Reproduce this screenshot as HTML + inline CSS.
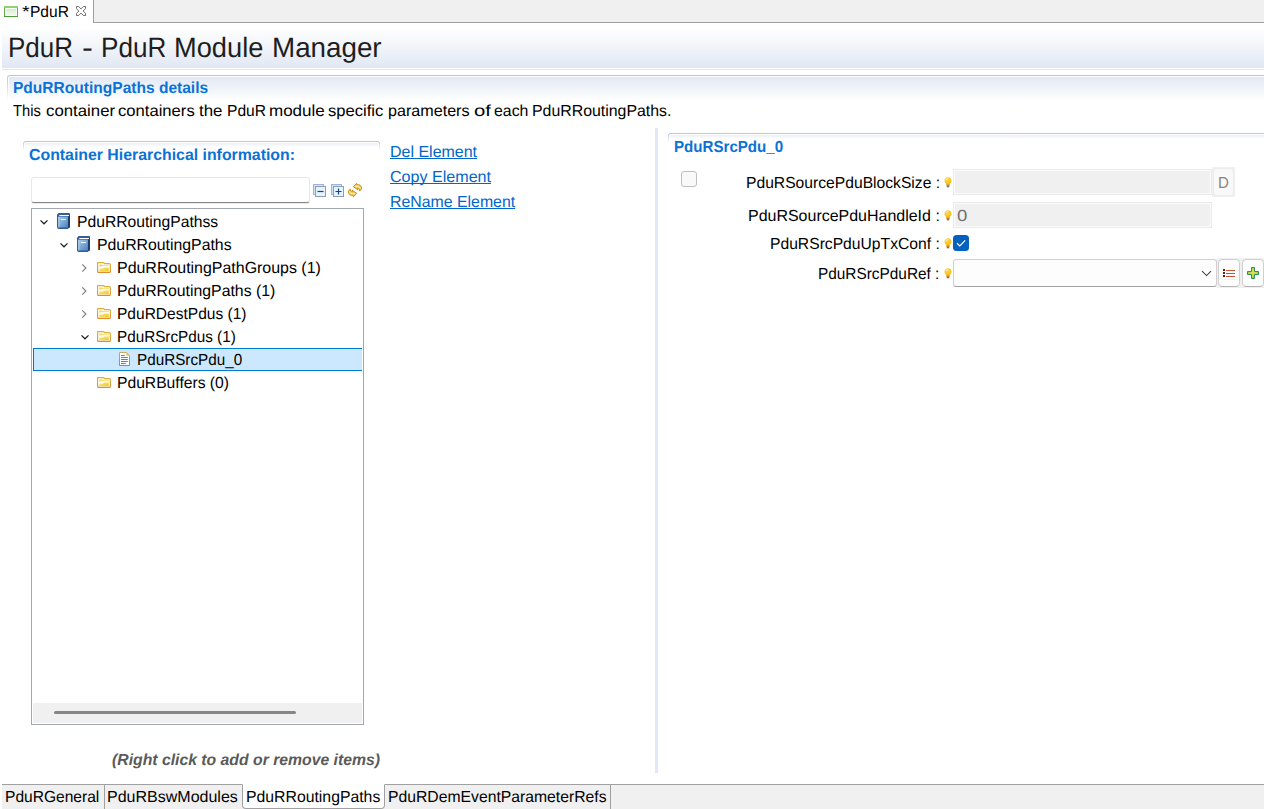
<!DOCTYPE html>
<html><head><meta charset="utf-8"><title>PduR</title>
<style>
html,body{margin:0;padding:0;overflow:hidden;}
body{width:1264px;height:809px;position:relative;overflow:hidden;background:#fff;font-family:"Liberation Sans",sans-serif;}
.a{position:absolute;box-sizing:border-box;}
.t{position:absolute;text-rendering:geometricPrecision;white-space:pre;transform-origin:0 50%;font-family:"Liberation Sans",sans-serif;}
</style></head><body>
<!-- top tab bar -->
<div class="a" style="left:93px;top:0;width:1171px;height:23px;background:#f0f0f0;border-left:1px solid #a0a0a0;border-bottom:1px solid #a0a0a0;"></div>
<!-- tab icon -->
<div class="a" style="left:4px;top:6px;width:14px;height:11px;background:#62ae48;border-bottom:1px solid #4f9a3a;"><div style="position:absolute;left:0;top:0;right:0;height:2px;background:#8fd272"></div><div style="position:absolute;left:1px;top:2px;right:1px;bottom:0px;background:#fbfefa"></div><div style="position:absolute;left:2px;top:3px;right:2px;bottom:1px;background:linear-gradient(#d9edcf,#f1f9ed)"></div></div>
<!-- close X -->
<svg class="a" style="left:76px;top:6px" width="10" height="10" viewBox="0 0 10 10"><path d="M0.5 0.5 H2.6 L5 2.9 L7.4 0.5 H9.5 V2.6 L7.1 5 L9.5 7.4 V9.5 H7.4 L5 7.1 L2.6 9.5 H0.5 V7.4 L2.9 5 L0.5 2.6 Z" fill="#fff" stroke="#5a5a5a" stroke-width="0.9"/></svg>
<!-- heading gradient -->
<div class="a" style="left:2px;top:23px;width:1262px;height:45px;background:linear-gradient(#ffffff 0%,#ffffff 10%,#e1e8f3 100%);"></div>
<div class="a" style="left:2px;top:69px;width:1262px;height:1px;background:#e2e8f3;"></div>
<!-- section 1 -->
<div class="a" style="left:7px;top:75px;width:1257px;height:26px;border-radius:3px 0 0 0;background:linear-gradient(#b4c6e0,#ffffff);"></div>
<div class="a" style="left:8px;top:76px;width:1256px;height:25px;border-radius:2px 0 0 0;background:#fff;"></div>
<div class="a" style="left:9px;top:77px;width:1255px;height:24px;background:linear-gradient(#e2e8f4,#ffffff);"></div>
<!-- section 2 (left) -->
<div class="a" style="left:23px;top:141px;width:357px;height:10px;border-radius:3px 3px 0 0;background:linear-gradient(#b4c6e0,#ffffff);"></div>
<div class="a" style="left:24px;top:142px;width:355px;height:10px;border-radius:2px 2px 0 0;background:#fff;"></div>
<div class="a" style="left:25px;top:143px;width:353px;height:4px;background:linear-gradient(#e9eef6,#ffffff);"></div>
<!-- filter text -->
<div class="a" style="left:31px;top:177px;width:279px;height:26px;border:1px solid #e8e8e8;border-bottom:1px solid #868686;border-radius:3px;background:#fff;box-shadow:0 1px 0 rgba(0,0,0,0.08);"></div>
<!-- collapse/expand icons -->
<svg class="a" style="left:313px;top:184px" width="13" height="13" viewBox="0 0 13 13"><rect x="0.5" y="0.5" width="10" height="10" fill="#cfe4f7" stroke="#a3b3cc"/><rect x="2.5" y="2.5" width="10" height="10" fill="#e6f2fc" stroke="#8c9bb8"/><path d="M4.5 7.5 H10.5" stroke="#0a4a86" stroke-width="1.2"/></svg>
<svg class="a" style="left:331px;top:184px" width="13" height="13" viewBox="0 0 13 13"><rect x="0.5" y="0.5" width="10" height="10" fill="#cfe4f7" stroke="#a3b3cc"/><rect x="2.5" y="2.5" width="10" height="10" fill="#e6f2fc" stroke="#8c9bb8"/><path d="M4.5 7.5 H10.5 M7.5 4.5 V10.5" stroke="#0a4a86" stroke-width="1.2"/></svg>
<!-- sync icon -->
<svg class="a" style="left:347px;top:182px" width="16" height="16" viewBox="0 0 16 16"><g fill="#fbd35c" stroke="#c48c12" stroke-width="1" stroke-linejoin="round"><path id="sa" d="M6.3 4.6 L9.6 1.3 L9.9 2.9 C12.3 2.1 14.6 3.6 14.5 6.2 C14.4 7.6 13.7 8.5 12.6 8.9 C12.9 7.4 12.2 6.3 10.6 6.2 L10.9 7.9 Z"/><path d="M9.7 11.4 L6.4 14.7 L6.1 13.1 C3.7 13.9 1.4 12.4 1.5 9.8 C1.6 8.4 2.3 7.5 3.4 7.1 C3.1 8.6 3.8 9.7 5.4 9.8 L5.1 8.1 Z"/></g><g fill="none" stroke="#fff6d8" stroke-width="0.8" stroke-linecap="round"><path d="M8.6 4.3 C10.5 3.6 12.6 4.2 13.2 6.2"/><path d="M7.4 11.7 C5.5 12.4 3.4 11.8 2.8 9.8"/></g></svg>
<!-- tree box -->
<div class="a" style="left:31px;top:208px;width:333px;height:517px;border:1px solid #a3a7b0;background:#fff;"></div>
<div class="a" style="left:33px;top:703px;width:329px;height:20px;background:#f0f0f0;"></div>
<div class="a" style="left:54px;top:711px;width:242px;height:3px;border-radius:2px;background:#868686;"></div>
<!-- selected row -->
<div class="a" style="left:33px;top:348px;width:329px;height:23px;background:#cce8ff;border:1px solid #0078d7;border-right:none;"></div>
<svg class="a" style="left:38.6px;top:218.2px" width="10" height="8" viewBox="0 0 10 8"><path d="M1.5 2.4 L5 5.8 L8.5 2.4" fill="none" stroke="#1c1c1c" stroke-width="1.2"/></svg>
<svg class="a" style="left:57px;top:213px" width="13" height="16" viewBox="0 0 13 16"><defs><linearGradient id="bk" x1="0" y1="0" x2="1" y2="1"><stop offset="0" stop-color="#a9cdea"/><stop offset="1" stop-color="#4a83bf"/></linearGradient></defs><path d="M1.5 0.5 H12.5 V14 L11 15.5 H1.5 Q0.5 15.5 0.5 14.5 V2 Z" fill="#35609e" stroke="#355c97" stroke-width="1" stroke-linejoin="round"/><rect x="11" y="2" width="2" height="12.5" fill="#1f3d6b"/><rect x="1.3" y="3.8" width="9.6" height="10.6" fill="url(#bk)"/><rect x="1.2" y="3.8" width="1.2" height="10.6" fill="#b7d5ee" opacity="0.8"/><rect x="2.3" y="2" width="9.7" height="1.1" fill="#ffffff"/><rect x="4" y="6" width="5" height="1" fill="#eef5fb"/></svg>
<svg class="a" style="left:58.8px;top:241.2px" width="10" height="8" viewBox="0 0 10 8"><path d="M1.5 2.4 L5 5.8 L8.5 2.4" fill="none" stroke="#1c1c1c" stroke-width="1.2"/></svg>
<svg class="a" style="left:77px;top:236px" width="13" height="16" viewBox="0 0 13 16"><defs><linearGradient id="bk" x1="0" y1="0" x2="1" y2="1"><stop offset="0" stop-color="#a9cdea"/><stop offset="1" stop-color="#4a83bf"/></linearGradient></defs><path d="M1.5 0.5 H12.5 V14 L11 15.5 H1.5 Q0.5 15.5 0.5 14.5 V2 Z" fill="#35609e" stroke="#355c97" stroke-width="1" stroke-linejoin="round"/><rect x="11" y="2" width="2" height="12.5" fill="#1f3d6b"/><rect x="1.3" y="3.8" width="9.6" height="10.6" fill="url(#bk)"/><rect x="1.2" y="3.8" width="1.2" height="10.6" fill="#b7d5ee" opacity="0.8"/><rect x="2.3" y="2" width="9.7" height="1.1" fill="#ffffff"/><rect x="4" y="6" width="5" height="1" fill="#eef5fb"/></svg>
<svg class="a" style="left:80.1px;top:263.0px" width="8" height="10" viewBox="0 0 8 10"><path d="M2.3 1.3 L5.9 5 L2.3 8.7" fill="none" stroke="#7d7d7d" stroke-width="1.1"/></svg>
<svg class="a" style="left:80.1px;top:286.0px" width="8" height="10" viewBox="0 0 8 10"><path d="M2.3 1.3 L5.9 5 L2.3 8.7" fill="none" stroke="#7d7d7d" stroke-width="1.1"/></svg>
<svg class="a" style="left:80.1px;top:309.0px" width="8" height="10" viewBox="0 0 8 10"><path d="M2.3 1.3 L5.9 5 L2.3 8.7" fill="none" stroke="#7d7d7d" stroke-width="1.1"/></svg>
<svg class="a" style="left:79.5px;top:333.2px" width="10" height="8" viewBox="0 0 10 8"><path d="M1.5 2.4 L5 5.8 L8.5 2.4" fill="none" stroke="#1c1c1c" stroke-width="1.2"/></svg>
<svg class="a" style="left:97px;top:262px" width="14" height="11" viewBox="0 0 14 11"><defs><linearGradient id="fo" x1="0" y1="0" x2="0" y2="1"><stop offset="0" stop-color="#dbb13c"/><stop offset="1" stop-color="#e08b2c"/></linearGradient><linearGradient id="fi" x1="0" y1="0" x2="1" y2="1"><stop offset="0" stop-color="#fbe89a"/><stop offset="1" stop-color="#efc914"/></linearGradient></defs><path d="M0.6 0.6 H6.8 L7.4 1.6 H12.4 Q13.4 1.6 13.4 2.6 V9.4 Q13.4 10.4 12.4 10.4 H1.6 Q0.6 10.4 0.6 9.4 Z" fill="#fffdf4" stroke="url(#fo)" stroke-width="1.1"/><path d="M2.2 2.4 H5 L5.8 3.2 H11.8 V3.9 H5 L4.4 4.6 H2.2 Z" fill="#f4d768"/><path d="M2.2 9.3 V6.6 H6 L7 5.4 H11.8 V9.3 Z" fill="url(#fi)"/></svg>
<svg class="a" style="left:97px;top:285px" width="14" height="11" viewBox="0 0 14 11"><defs><linearGradient id="fo" x1="0" y1="0" x2="0" y2="1"><stop offset="0" stop-color="#dbb13c"/><stop offset="1" stop-color="#e08b2c"/></linearGradient><linearGradient id="fi" x1="0" y1="0" x2="1" y2="1"><stop offset="0" stop-color="#fbe89a"/><stop offset="1" stop-color="#efc914"/></linearGradient></defs><path d="M0.6 0.6 H6.8 L7.4 1.6 H12.4 Q13.4 1.6 13.4 2.6 V9.4 Q13.4 10.4 12.4 10.4 H1.6 Q0.6 10.4 0.6 9.4 Z" fill="#fffdf4" stroke="url(#fo)" stroke-width="1.1"/><path d="M2.2 2.4 H5 L5.8 3.2 H11.8 V3.9 H5 L4.4 4.6 H2.2 Z" fill="#f4d768"/><path d="M2.2 9.3 V6.6 H6 L7 5.4 H11.8 V9.3 Z" fill="url(#fi)"/></svg>
<svg class="a" style="left:97px;top:308px" width="14" height="11" viewBox="0 0 14 11"><defs><linearGradient id="fo" x1="0" y1="0" x2="0" y2="1"><stop offset="0" stop-color="#dbb13c"/><stop offset="1" stop-color="#e08b2c"/></linearGradient><linearGradient id="fi" x1="0" y1="0" x2="1" y2="1"><stop offset="0" stop-color="#fbe89a"/><stop offset="1" stop-color="#efc914"/></linearGradient></defs><path d="M0.6 0.6 H6.8 L7.4 1.6 H12.4 Q13.4 1.6 13.4 2.6 V9.4 Q13.4 10.4 12.4 10.4 H1.6 Q0.6 10.4 0.6 9.4 Z" fill="#fffdf4" stroke="url(#fo)" stroke-width="1.1"/><path d="M2.2 2.4 H5 L5.8 3.2 H11.8 V3.9 H5 L4.4 4.6 H2.2 Z" fill="#f4d768"/><path d="M2.2 9.3 V6.6 H6 L7 5.4 H11.8 V9.3 Z" fill="url(#fi)"/></svg>
<svg class="a" style="left:97px;top:331px" width="14" height="11" viewBox="0 0 14 11"><defs><linearGradient id="fo" x1="0" y1="0" x2="0" y2="1"><stop offset="0" stop-color="#dbb13c"/><stop offset="1" stop-color="#e08b2c"/></linearGradient><linearGradient id="fi" x1="0" y1="0" x2="1" y2="1"><stop offset="0" stop-color="#fbe89a"/><stop offset="1" stop-color="#efc914"/></linearGradient></defs><path d="M0.6 0.6 H6.8 L7.4 1.6 H12.4 Q13.4 1.6 13.4 2.6 V9.4 Q13.4 10.4 12.4 10.4 H1.6 Q0.6 10.4 0.6 9.4 Z" fill="#fffdf4" stroke="url(#fo)" stroke-width="1.1"/><path d="M2.2 2.4 H5 L5.8 3.2 H11.8 V3.9 H5 L4.4 4.6 H2.2 Z" fill="#f4d768"/><path d="M2.2 9.3 V6.6 H6 L7 5.4 H11.8 V9.3 Z" fill="url(#fi)"/></svg>
<svg class="a" style="left:97px;top:377px" width="14" height="11" viewBox="0 0 14 11"><defs><linearGradient id="fo" x1="0" y1="0" x2="0" y2="1"><stop offset="0" stop-color="#dbb13c"/><stop offset="1" stop-color="#e08b2c"/></linearGradient><linearGradient id="fi" x1="0" y1="0" x2="1" y2="1"><stop offset="0" stop-color="#fbe89a"/><stop offset="1" stop-color="#efc914"/></linearGradient></defs><path d="M0.6 0.6 H6.8 L7.4 1.6 H12.4 Q13.4 1.6 13.4 2.6 V9.4 Q13.4 10.4 12.4 10.4 H1.6 Q0.6 10.4 0.6 9.4 Z" fill="#fffdf4" stroke="url(#fo)" stroke-width="1.1"/><path d="M2.2 2.4 H5 L5.8 3.2 H11.8 V3.9 H5 L4.4 4.6 H2.2 Z" fill="#f4d768"/><path d="M2.2 9.3 V6.6 H6 L7 5.4 H11.8 V9.3 Z" fill="url(#fi)"/></svg>
<svg class="a" style="left:119px;top:352px" width="11" height="14" viewBox="0 0 11 14"><defs><linearGradient id="fl" x1="0" y1="0" x2="0" y2="1"><stop offset="0" stop-color="#c9ab5e"/><stop offset="1" stop-color="#8088ac"/></linearGradient></defs><path d="M0.5 0.5 H7.5 L10.5 3.5 V13.5 H0.5 Z" fill="#fbfcff" stroke="url(#fl)" stroke-width="1"/><path d="M7.3 0.7 V3.7 H10.3 Z" fill="#e2bd62"/><g stroke="#5d6da3" stroke-width="0.9"><path d="M2 3.5 H5.8 M2 5.5 H8.8 M2 7.5 H8.8 M2 9.5 H8.8 M2 11.5 H6.8"/></g></svg>
<!-- vertical sash -->
<div class="a" style="left:655px;top:128px;width:3px;height:645px;background:#e2e6f5;"></div>
<!-- right section -->
<div class="a" style="left:668px;top:133px;width:596px;height:10px;border-radius:3px 0 0 0;background:linear-gradient(#b4c6e0,#ffffff);"></div>
<div class="a" style="left:669px;top:134px;width:595px;height:10px;border-radius:2px 0 0 0;background:#fff;"></div>
<div class="a" style="left:670px;top:135px;width:594px;height:4px;background:linear-gradient(#e9eef6,#ffffff);"></div>
<!-- unchecked checkbox -->
<div class="a" style="left:681px;top:171px;width:16px;height:16px;border:1px solid #bfbfbf;border-radius:3px;background:#f9f9f9;"></div>
<!-- field 1 -->
<div class="a" style="left:953px;top:169px;width:259px;height:26px;border:1px solid #eaeaea;background:#fbfbfb;"><div style="position:absolute;left:1px;top:1px;right:1px;bottom:1px;background:#f0f0f0"></div></div>
<div class="a" style="left:1212px;top:167px;width:23px;height:30px;background:#f0f0f0;"></div>
<div class="a" style="left:1213px;top:168px;width:21px;height:28px;background:#f9f9f9;border:1px solid #ececec;border-radius:4px;"></div>
<!-- field 2 -->
<div class="a" style="left:953px;top:202px;width:259px;height:26px;border:1px solid #eaeaea;background:#fbfbfb;"><div style="position:absolute;left:1px;top:1px;right:1px;bottom:1px;background:#f0f0f0"></div></div>
<!-- checked checkbox -->
<div class="a" style="left:953px;top:235px;width:16px;height:16px;border-radius:3.5px;background:#0560be;"></div>
<svg class="a" style="left:953px;top:235px" width="16" height="16" viewBox="0 0 16 16"><path d="M4 8.3 L6.8 11 L12.2 5.3" fill="none" stroke="#fff" stroke-width="1.2"/></svg>
<!-- combo -->
<div class="a" style="left:953px;top:259px;width:264px;height:28px;border:1px solid #d0d0d0;border-bottom-color:#a2a2a2;border-radius:3px;background:#fdfdfd;"></div>
<svg class="a" style="left:1201px;top:269px" width="12" height="8" viewBox="0 0 12 8"><path d="M1.1 2.2 L5.55 6.6 L10 2.2" fill="none" stroke="#3c3c3c" stroke-width="1.05"/></svg>
<!-- list button -->
<div class="a" style="left:1217px;top:258px;width:47px;height:30px;background:#f0f0f0;"></div>
<div class="a" style="left:1218px;top:259px;width:22px;height:28px;border:1px solid #cfcfcf;border-bottom-color:#b4b4b4;border-radius:4.5px;background:#fdfdfd;"></div>
<div class="a" style="left:1242px;top:259px;width:22px;height:28px;border:1px solid #cfcfcf;border-bottom-color:#b4b4b4;border-radius:4.5px;background:#fdfdfd;"></div>
<svg class="a" style="left:1222px;top:268px" width="15" height="13" viewBox="0 0 15 13" shape-rendering="crispEdges"><g fill="#c8512f"><rect x="4" y="2" width="9" height="1"/><rect x="4" y="5" width="9" height="1"/><rect x="4" y="8" width="9" height="1"/></g><g fill="#6b1c10"><rect x="1" y="1" width="2" height="2"/><rect x="1" y="4" width="2" height="2"/><rect x="1" y="7" width="2" height="2"/></g><rect x="2" y="11" width="12" height="1" fill="#eeeeee"/></svg>
<svg class="a" style="left:1247px;top:267px" width="12" height="12" viewBox="0 0 12 12"><defs><radialGradient id="pl" cx="0.5" cy="0.45" r="0.6"><stop offset="0" stop-color="#e3e85a"/><stop offset="1" stop-color="#9cc23c"/></radialGradient></defs><path d="M4.5 0.5 H7.5 V4.5 H11.5 V7.5 H7.5 V11.5 H4.5 V7.5 H0.5 V4.5 H4.5 Z" fill="url(#pl)" stroke="#2f9058" stroke-width="1" stroke-linejoin="round"/></svg>
<!-- bottom tab bar -->
<div class="a" style="left:2px;top:784px;width:1262px;height:25px;background:#f0f0f0;border-top:1px solid #a0a0a0;"></div>
<div class="a" style="left:104px;top:785px;width:1px;height:24px;background:#a0a0a0;"></div>
<div class="a" style="left:610px;top:785px;width:1px;height:24px;background:#a0a0a0;"></div>
<div class="a" style="left:242px;top:784px;width:143px;height:25px;background:#fff;border:1px solid #a0a0a0;border-top:1px solid #fff;border-radius:0 0 4px 4px;"></div>
<svg class="a" style="left:944px;top:177px" width="8" height="11" viewBox="0 0 8 11"><defs><radialGradient id="bu" cx="0.4" cy="0.35" r="0.7"><stop offset="0" stop-color="#ffd94a"/><stop offset="1" stop-color="#fbb90a"/></radialGradient></defs><path d="M4 0.3 C6.1 0.3 7.5 1.9 7.5 3.8 C7.5 5.3 6.4 6.2 5.7 7.4 H2.3 C1.6 6.2 0.5 5.3 0.5 3.8 C0.5 1.9 1.9 0.3 4 0.3 Z" fill="url(#bu)"/><rect x="2.4" y="7.3" width="3.2" height="1.9" fill="#cc8523"/><rect x="2.8" y="9.1" width="2.4" height="1.2" fill="#5f6c70"/><path d="M2.3 2.6 L3.5 1.5" stroke="#fff" stroke-width="0.9" stroke-linecap="round" opacity="0.9"/></svg>
<svg class="a" style="left:944px;top:210px" width="8" height="11" viewBox="0 0 8 11"><defs><radialGradient id="bu" cx="0.4" cy="0.35" r="0.7"><stop offset="0" stop-color="#ffd94a"/><stop offset="1" stop-color="#fbb90a"/></radialGradient></defs><path d="M4 0.3 C6.1 0.3 7.5 1.9 7.5 3.8 C7.5 5.3 6.4 6.2 5.7 7.4 H2.3 C1.6 6.2 0.5 5.3 0.5 3.8 C0.5 1.9 1.9 0.3 4 0.3 Z" fill="url(#bu)"/><rect x="2.4" y="7.3" width="3.2" height="1.9" fill="#cc8523"/><rect x="2.8" y="9.1" width="2.4" height="1.2" fill="#5f6c70"/><path d="M2.3 2.6 L3.5 1.5" stroke="#fff" stroke-width="0.9" stroke-linecap="round" opacity="0.9"/></svg>
<svg class="a" style="left:944px;top:238px" width="8" height="11" viewBox="0 0 8 11"><defs><radialGradient id="bu" cx="0.4" cy="0.35" r="0.7"><stop offset="0" stop-color="#ffd94a"/><stop offset="1" stop-color="#fbb90a"/></radialGradient></defs><path d="M4 0.3 C6.1 0.3 7.5 1.9 7.5 3.8 C7.5 5.3 6.4 6.2 5.7 7.4 H2.3 C1.6 6.2 0.5 5.3 0.5 3.8 C0.5 1.9 1.9 0.3 4 0.3 Z" fill="url(#bu)"/><rect x="2.4" y="7.3" width="3.2" height="1.9" fill="#cc8523"/><rect x="2.8" y="9.1" width="2.4" height="1.2" fill="#5f6c70"/><path d="M2.3 2.6 L3.5 1.5" stroke="#fff" stroke-width="0.9" stroke-linecap="round" opacity="0.9"/></svg>
<svg class="a" style="left:944px;top:268px" width="8" height="11" viewBox="0 0 8 11"><defs><radialGradient id="bu" cx="0.4" cy="0.35" r="0.7"><stop offset="0" stop-color="#ffd94a"/><stop offset="1" stop-color="#fbb90a"/></radialGradient></defs><path d="M4 0.3 C6.1 0.3 7.5 1.9 7.5 3.8 C7.5 5.3 6.4 6.2 5.7 7.4 H2.3 C1.6 6.2 0.5 5.3 0.5 3.8 C0.5 1.9 1.9 0.3 4 0.3 Z" fill="url(#bu)"/><rect x="2.4" y="7.3" width="3.2" height="1.9" fill="#cc8523"/><rect x="2.8" y="9.1" width="2.4" height="1.2" fill="#5f6c70"/><path d="M2.3 2.6 L3.5 1.5" stroke="#fff" stroke-width="0.9" stroke-linecap="round" opacity="0.9"/></svg>
<div class="t" style="left:21.98px;top:2px;font-size:16px;line-height:22px;font-weight:normal;font-style:normal;color:#000;transform:scaleX(1.2200);">*</div>
<div class="t" style="left:30.13px;top:2px;font-size:16px;line-height:22px;font-weight:normal;font-style:normal;color:#000;transform:scaleX(0.9711);">PduR</div>
<div class="t" style="left:7.94px;top:28px;font-size:28px;line-height:39px;font-weight:normal;font-style:normal;color:#1e1e1e;transform:scaleX(0.9284);">PduR</div>
<div class="t" style="left:81.63px;top:28px;font-size:28px;line-height:39px;font-weight:normal;font-style:normal;color:#1e1e1e;transform:scaleX(1.1714);">-</div>
<div class="t" style="left:100.93px;top:28px;font-size:28px;line-height:39px;font-weight:normal;font-style:normal;color:#1e1e1e;transform:scaleX(0.9328);">PduR</div>
<div class="t" style="left:173.55px;top:28px;font-size:28px;line-height:39px;font-weight:normal;font-style:normal;color:#1e1e1e;transform:scaleX(0.9730);">Module</div>
<div class="t" style="left:271.92px;top:28px;font-size:28px;line-height:39px;font-weight:normal;font-style:normal;color:#1e1e1e;transform:scaleX(0.9917);">Manager</div>
<div class="t" style="left:13.03px;top:78px;font-size:16px;line-height:22px;font-weight:bold;font-style:normal;color:#0a72d6;transform:scaleX(0.9714);">PduRRoutingPaths details</div>
<div class="t" style="left:13.30px;top:101px;font-size:16px;line-height:22px;font-weight:normal;font-style:normal;color:#000;transform:scaleX(0.9200);">This</div>
<div class="t" style="left:45.55px;top:101px;font-size:16px;line-height:22px;font-weight:normal;font-style:normal;color:#000;transform:scaleX(1.0492);">container</div>
<div class="t" style="left:118.46px;top:101px;font-size:16px;line-height:22px;font-weight:normal;font-style:normal;color:#000;transform:scaleX(1.0389);">containers</div>
<div class="t" style="left:199.15px;top:101px;font-size:16px;line-height:22px;font-weight:normal;font-style:normal;color:#000;transform:scaleX(1.0524);">the</div>
<div class="t" style="left:227.13px;top:101px;font-size:16px;line-height:22px;font-weight:normal;font-style:normal;color:#000;transform:scaleX(0.9737);">PduR</div>
<div class="t" style="left:268.84px;top:101px;font-size:16px;line-height:22px;font-weight:normal;font-style:normal;color:#000;transform:scaleX(1.0627);">module</div>
<div class="t" style="left:328.26px;top:101px;font-size:16px;line-height:22px;font-weight:normal;font-style:normal;color:#000;transform:scaleX(1.0365);">specific</div>
<div class="t" style="left:388.29px;top:101px;font-size:16px;line-height:22px;font-weight:normal;font-style:normal;color:#000;transform:scaleX(1.0075);">parameters</div>
<div class="t" style="left:474.33px;top:101px;font-size:16px;line-height:22px;font-weight:normal;font-style:normal;color:#000;transform:scaleX(1.2667);">of</div>
<div class="t" style="left:493.61px;top:101px;font-size:16px;line-height:22px;font-weight:normal;font-style:normal;color:#000;transform:scaleX(0.9909);">each</div>
<div class="t" style="left:532.21px;top:101px;font-size:16px;line-height:22px;font-weight:normal;font-style:normal;color:#000;transform:scaleX(0.9920);">PduRRoutingPaths.</div>
<div class="t" style="left:28.91px;top:145px;font-size:16px;line-height:22px;font-weight:bold;font-style:normal;color:#0a72d6;transform:scaleX(0.9906);">Container Hierarchical information:</div>
<div class="t" style="left:390.00px;top:142px;font-size:16px;line-height:22px;font-weight:normal;font-style:normal;color:#0066cc;transform:scaleX(0.9988);text-decoration:underline;text-underline-offset:0.6px;text-decoration-thickness:1px;text-decoration-skip-ink:none;">Del Element</div>
<div class="t" style="left:389.60px;top:167px;font-size:16px;line-height:22px;font-weight:normal;font-style:normal;color:#0066cc;transform:scaleX(1.0050);text-decoration:underline;text-underline-offset:0.6px;text-decoration-thickness:1px;text-decoration-skip-ink:none;">Copy Element</div>
<div class="t" style="left:390.01px;top:192px;font-size:16px;line-height:22px;font-weight:normal;font-style:normal;color:#0066cc;transform:scaleX(0.9912);text-decoration:underline;text-underline-offset:0.6px;text-decoration-thickness:1px;text-decoration-skip-ink:none;">ReName Element</div>
<div class="t" style="left:77.12px;top:212px;font-size:16px;line-height:22px;font-weight:normal;font-style:normal;color:#000;transform:scaleX(0.9797);">PduRRoutingPathss</div>
<div class="t" style="left:96.81px;top:235px;font-size:16px;line-height:22px;font-weight:normal;font-style:normal;color:#000;transform:scaleX(0.9889);">PduRRoutingPaths</div>
<div class="t" style="left:117.00px;top:258px;font-size:16px;line-height:22px;font-weight:normal;font-style:normal;color:#000;transform:scaleX(0.9966);">PduRRoutingPathGroups (1)</div>
<div class="t" style="left:117.01px;top:281px;font-size:16px;line-height:22px;font-weight:normal;font-style:normal;color:#000;transform:scaleX(0.9886);">PduRRoutingPaths (1)</div>
<div class="t" style="left:117.03px;top:304px;font-size:16px;line-height:22px;font-weight:normal;font-style:normal;color:#000;transform:scaleX(0.9710);">PduRDestPdus (1)</div>
<div class="t" style="left:117.05px;top:327px;font-size:16px;line-height:22px;font-weight:normal;font-style:normal;color:#000;transform:scaleX(0.9537);">PduRSrcPdus (1)</div>
<div class="t" style="left:137.05px;top:350px;font-size:16px;line-height:22px;font-weight:normal;font-style:normal;color:#000;transform:scaleX(0.9532);">PduRSrcPdu_0</div>
<div class="t" style="left:117.02px;top:373px;font-size:16px;line-height:22px;font-weight:normal;font-style:normal;color:#000;transform:scaleX(0.9786);">PduRBuffers (0)</div>
<div class="t" style="left:112.01px;top:750px;font-size:16px;line-height:22px;font-weight:bold;font-style:italic;color:#5a5a5a;transform:scaleX(0.9852);">(Right click to add or remove items)</div>
<div class="t" style="left:5.33px;top:787px;font-size:16px;line-height:22px;font-weight:normal;font-style:normal;color:#000;transform:scaleX(0.9726);">PduRGeneral</div>
<div class="t" style="left:107.40px;top:787px;font-size:16px;line-height:22px;font-weight:normal;font-style:normal;color:#000;transform:scaleX(1.0008);">PduRBswModules</div>
<div class="t" style="left:246.11px;top:787px;font-size:16px;line-height:22px;font-weight:normal;font-style:normal;color:#000;transform:scaleX(0.9867);">PduRRoutingPaths</div>
<div class="t" style="left:388.12px;top:787px;font-size:16px;line-height:22px;font-weight:normal;font-style:normal;color:#000;transform:scaleX(0.9828);">PduRDemEventParameterRefs</div>
<div class="t" style="left:674.06px;top:137px;font-size:16px;line-height:22px;font-weight:bold;font-style:normal;color:#0a72d6;transform:scaleX(0.9439);">PduRSrcPdu_0</div>
<div class="t" style="left:745.62px;top:173px;font-size:16px;line-height:22px;font-weight:normal;font-style:normal;color:#000;transform:scaleX(0.9786);">PduRSourcePduBlockSize :</div>
<div class="t" style="left:747.70px;top:206px;font-size:16px;line-height:22px;font-weight:normal;font-style:normal;color:#000;transform:scaleX(0.9984);">PduRSourcePduHandleId :</div>
<div class="t" style="left:770.02px;top:234px;font-size:16px;line-height:22px;font-weight:normal;font-style:normal;color:#000;transform:scaleX(0.9789);">PduRSrcPduUpTxConf :</div>
<div class="t" style="left:818.24px;top:264px;font-size:16px;line-height:22px;font-weight:normal;font-style:normal;color:#000;transform:scaleX(0.9613);">PduRSrcPduRef :</div>
<div class="t" style="left:1218.26px;top:173px;font-size:16px;line-height:22px;font-weight:normal;font-style:normal;color:#858585;transform:scaleX(0.9400);">D</div>
<div class="t" style="left:956.54px;top:206px;font-size:16px;line-height:22px;font-weight:normal;font-style:normal;color:#707070;transform:scaleX(1.1571);">0</div>
</body></html>
